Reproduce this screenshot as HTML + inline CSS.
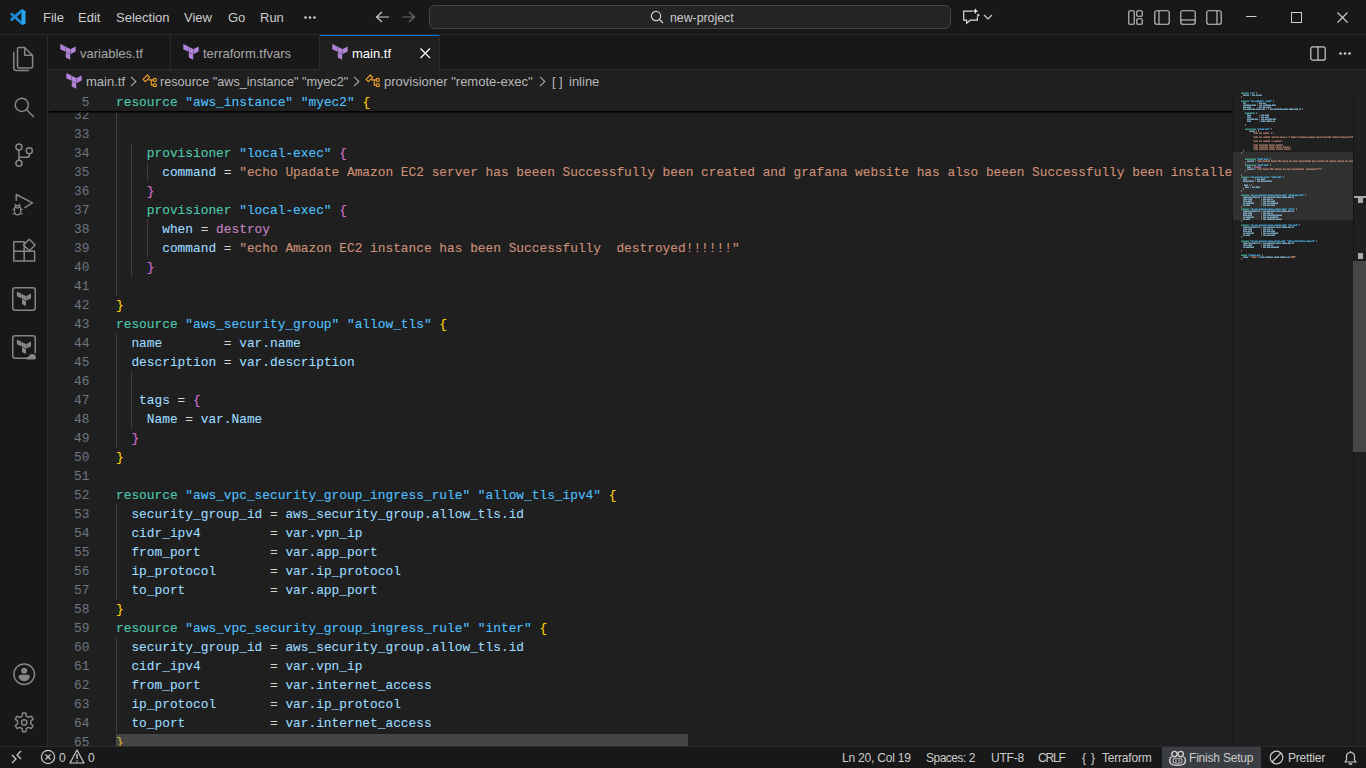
<!DOCTYPE html><html><head><meta charset="utf-8"><title>VS Code</title><style>
*{margin:0;padding:0;box-sizing:border-box}
html,body{width:1366px;height:768px;overflow:hidden;background:#1f1f1f}
body{position:relative;font-family:"Liberation Sans",sans-serif;font-size:13px;color:#ccc}
.abs{position:absolute}
svg{position:absolute;overflow:visible}
#title{left:0;top:0;width:1366px;height:35px;background:#181818;border-bottom:1px solid #2b2b2b}
#act{left:0;top:35px;width:48px;height:711px;background:#181818;border-right:1px solid #2b2b2b}
#tabs{left:48px;top:35px;width:1318px;height:35px;background:#181818}
#tabline{left:0;top:34px;width:1318px;height:1px;background:#2b2b2b;z-index:1}
#crumbs{left:48px;top:70px;width:1318px;height:22px;background:#1f1f1f}
#editor{left:48px;top:92px;width:1318px;height:654px;background:#1f1f1f;overflow:hidden}
#status{left:0;top:746px;width:1366px;height:22px;background:#181818;border-top:1px solid #2b2b2b}
.t{position:absolute;white-space:pre}
.menu{top:10px;line-height:16px;color:#ccc;font-size:13px}
.tab{position:absolute;top:0;height:35px;border-right:1px solid #2b2b2b;background:#181818}
.tab.active{background:#1f1f1f;border-right:1px solid #2b2b2b;z-index:2}
.tabtxt{position:absolute;top:11px;line-height:16px;font-size:13px;color:#a8a8a8;white-space:pre}
.crumb{position:absolute;top:4px;line-height:16px;font-size:13px;color:#b8b8b8;white-space:pre}
.code{position:absolute;left:68px;font-family:"Liberation Mono",monospace;font-size:12.83px;line-height:19px;height:19px;white-space:pre;color:#d4d4d4;-webkit-text-stroke:0.1px}
.ln{position:absolute;left:0;width:41.5px;text-align:right;font-family:"Liberation Mono",monospace;font-size:12.83px;line-height:19px;height:19px;color:#6e7681}
.k{color:#4ec9b0}.l{color:#4fc1ff}.p{color:#9cdcfe}.s{color:#ce9178}.y{color:#ffd700}.m{color:#da70d6}.kw{color:#c586c0}.b{color:#179fff}
.guide{position:absolute;width:1px;background:#404040}
.sb{position:absolute;top:3px;line-height:16px;font-size:12px;letter-spacing:-0.2px;color:#ccc;white-space:pre}
</style></head><body>
<div id="title" class="abs">
<svg style="left:6px;top:5px" width="24" height="24" viewBox="0 0 24 24"><g transform="translate(1.6,1.5) scale(0.9)"><path d="M4.4 8.4 L16.2 18.9 M4.4 14.6 L16.2 4.3" stroke="#1a8ad6" stroke-width="3" stroke-linecap="round"/><path d="M15.4 4.2 L17.2 3.8 L19.9 5.1 V18.9 L17.2 20.1 L15.4 19.7Z" fill="#2aa5f0"/></g></svg>
<div class="t menu" style="left:43px">File</div>
<div class="t menu" style="left:78px">Edit</div>
<div class="t menu" style="left:116px">Selection</div>
<div class="t menu" style="left:184px">View</div>
<div class="t menu" style="left:228px">Go</div>
<div class="t menu" style="left:260px">Run</div>
<svg style="left:304px;top:16px" width="12" height="3"><circle cx="1.5" cy="1.5" r="1.35" fill="#ccc"/><circle cx="6" cy="1.5" r="1.35" fill="#ccc"/><circle cx="10.5" cy="1.5" r="1.35" fill="#ccc"/></svg>
<svg style="left:375px;top:11px" width="16" height="12" viewBox="0 0 16 12"><path d="M7 1 L1.5 6 L7 11 M1.5 6 H14" stroke="#ccc" stroke-width="1.2" fill="none"/></svg>
<svg style="left:400px;top:11px" width="16" height="12" viewBox="0 0 16 12"><path d="M9 1 L14.5 6 L9 11 M14.5 6 H2" stroke="#6a6a6a" stroke-width="1.2" fill="none"/></svg>
<div class="abs" style="left:429px;top:5px;width:522px;height:24px;border:1px solid #454545;border-radius:6px;background:#242424"></div>
<svg style="left:650px;top:10px" width="14" height="14" viewBox="0 0 14 14"><circle cx="6" cy="6" r="4.6" stroke="#ccc" stroke-width="1.2" fill="none"/><path d="M9.3 9.3 L13 13" stroke="#ccc" stroke-width="1.3"/></svg>
<div class="t" style="left:670px;top:10px;line-height:16px;font-size:12.3px;color:#ccc">new-project</div>
<svg style="left:962px;top:8px" width="18" height="17" viewBox="0 0 18 17"><path d="M10.6 3.1 H1.7 V12.2 H4.6 V15.2 L8.4 12.2 H15.4 V8.4" stroke="#ddd" stroke-width="1.2" fill="none"/><path d="M13.4 0.2 L14.3 2.2 L16.3 3.1 L14.3 4 L13.4 6 L12.5 4 L10.5 3.1 L12.5 2.2Z" fill="#e6e6e6"/><path d="M16.2 5.3 L16.8 6.5 L18 7.1 L16.8 7.7 L16.2 8.9 L15.6 7.7 L14.4 7.1 L15.6 6.5Z" fill="#e6e6e6"/></svg>
<svg style="left:983px;top:14px" width="10" height="6" viewBox="0 0 10 6"><path d="M1 1 L5 5 L9 1" stroke="#ccc" stroke-width="1.2" fill="none"/></svg>
<svg style="left:1128px;top:10px" width="16" height="15" viewBox="0 0 16 15"><rect x="0.8" y="0.8" width="5.4" height="13.4" rx="1" stroke="#ccc" stroke-width="1.1" fill="none"/><rect x="8.8" y="0.8" width="5.4" height="5.4" rx="1" stroke="#ccc" stroke-width="1.1" fill="none"/><rect x="8.8" y="8.8" width="5.4" height="5.4" rx="1" stroke="#ccc" stroke-width="1.1" fill="none"/></svg>
<svg style="left:1154px;top:10px" width="16" height="15" viewBox="0 0 16 15"><rect x="0.8" y="0.8" width="14.4" height="13.4" rx="2" stroke="#ccc" stroke-width="1.1" fill="none"/><path d="M5 1 V14" stroke="#ccc" stroke-width="1.1" fill="none"/></svg>
<svg style="left:1180px;top:10px" width="16" height="15" viewBox="0 0 16 15"><rect x="0.8" y="0.8" width="14.4" height="13.4" rx="2" stroke="#ccc" stroke-width="1.1" fill="none"/><path d="M1 10 H15" stroke="#ccc" stroke-width="1.1" fill="none"/></svg>
<svg style="left:1206px;top:10px" width="16" height="15" viewBox="0 0 16 15"><rect x="0.8" y="0.8" width="14.4" height="13.4" rx="2" stroke="#ccc" stroke-width="1.1" fill="none"/><path d="M11 1 V14" stroke="#ccc" stroke-width="1.1" fill="none"/></svg>
<svg style="left:1246px;top:16px" width="11" height="2"><path d="M0 0.5 H10.5" stroke="#ccc" stroke-width="1"/></svg>
<svg style="left:1291px;top:12px" width="12" height="12"><rect x="0.5" y="0.5" width="10" height="10" stroke="#ccc" stroke-width="1" fill="none"/></svg>
<svg style="left:1337px;top:12px" width="12" height="12"><path d="M0.5 0.5 L10.5 10.5 M10.5 0.5 L0.5 10.5" stroke="#ccc" stroke-width="1.1"/></svg>
</div>
<div id="act" class="abs">
<svg style="left:12px;top:11px" width="24" height="24" viewBox="0 0 24 24"><path d="M7 1.5 H12.5 L20.6 9.5 V20.3 Q20.6 21.9 19 21.9 H7 Q5.5 21.9 5.5 20.3 V3 Q5.5 1.5 7 1.5Z" stroke="#868686" stroke-width="1.5" fill="none" stroke-linejoin="round" stroke-linecap="round"/><path d="M12.7 1.8 V9.3 H20.3" stroke="#868686" stroke-width="1.5" fill="none" stroke-linejoin="round" stroke-linecap="round"/><path d="M1.8 6.2 V21.9 Q1.8 24.4 4.3 24.4 H16.6" stroke="#868686" stroke-width="1.5" fill="none" stroke-linejoin="round" stroke-linecap="round"/></svg>
<svg style="left:12px;top:60px" width="24" height="24" viewBox="0 0 24 24"><circle cx="9.8" cy="9.9" r="6.6" stroke="#868686" stroke-width="1.5" fill="none" stroke-linejoin="round" stroke-linecap="round"/><path d="M14.6 14.8 L21.6 21.8" stroke="#868686" stroke-width="1.5" fill="none" stroke-linejoin="round" stroke-linecap="round"/></svg>
<svg style="left:12px;top:108px" width="24" height="24" viewBox="0 0 24 24"><circle cx="6.9" cy="3.9" r="3" stroke="#868686" stroke-width="1.5" fill="none" stroke-linejoin="round" stroke-linecap="round"/><circle cx="6.9" cy="20.2" r="3" stroke="#868686" stroke-width="1.5" fill="none" stroke-linejoin="round" stroke-linecap="round"/><circle cx="17.3" cy="7.8" r="3" stroke="#868686" stroke-width="1.5" fill="none" stroke-linejoin="round" stroke-linecap="round"/><path d="M6.9 6.9 V17.2 M17.3 10.8 V12.2 Q17.3 14.3 15.2 14.3 H6.9" stroke="#868686" stroke-width="1.5" fill="none" stroke-linejoin="round" stroke-linecap="round"/></svg>
<svg style="left:12px;top:158px" width="24" height="24" viewBox="0 0 24 24"><path d="M4.3 7.2 V1.5 L20.5 9.9 L12.9 14.6" stroke="#868686" stroke-width="1.5" fill="none" stroke-linejoin="round" stroke-linecap="round"/><path d="M2.5 16.5 Q2.5 12.5 5.6 12.5 Q8.7 12.5 8.7 16.5 V18.5 Q8.7 21.8 5.6 21.8 Q2.5 21.8 2.5 18.5 Z M3.2 13.6 L5.6 15.3 L8 13.6 M0.5 16.3 H2.5 M8.7 16.3 H10.7 M0.6 21.2 L2.8 20 M10.6 21.2 L8.4 20 M4 12.8 L3 11.2 M7.2 12.8 L8.2 11.2" stroke="#868686" stroke-width="1.3" fill="none" stroke-linejoin="round"/></svg>
<svg style="left:12px;top:203px" width="24" height="24" viewBox="0 0 24 24"><path d="M1.8 3.8 H12.2 V23 H1.8Z M1.8 13.2 H22.6 V23 H12.2" stroke="#868686" stroke-width="1.5" fill="none" stroke-linejoin="round" stroke-linecap="round"/><path d="M17.3 1.2 L23.1 7 L17.3 12.8 L11.5 7Z" stroke="#868686" stroke-width="1.5" fill="none" stroke-linejoin="round" stroke-linecap="round"/></svg>
<svg style="left:12px;top:252px" width="24" height="24" viewBox="0 0 24 24"><rect x="0.75" y="0.75" width="22.5" height="22.5" rx="2.5" stroke="#868686" stroke-width="1.5" fill="none" stroke-linejoin="round" stroke-linecap="round"/><path d="M0.3 0 L5.5 2.6 V7.8 L0.3 5.2Z M5.8 2.8 L10.2 5.0 V10.2 L5.8 8.0Z M10.5 5.0 L15.7 2.4 V7.6 L10.5 10.2Z M5.8 8.4 L10.2 10.6 V15.8 L5.8 13.6Z" fill="#868686" transform="translate(4.6,4.4) scale(0.92)"/></svg>
<svg style="left:12px;top:300px" width="24" height="24" viewBox="0 0 24 24"><path d="M17 23.25 H3.25 Q0.75 23.25 0.75 20.75 V3.25 Q0.75 0.75 3.25 0.75 H20.75 Q23.25 0.75 23.25 3.25 V17.5" stroke="#868686" stroke-width="1.5" fill="none" stroke-linejoin="round" stroke-linecap="round"/><path d="M0.3 0 L5.5 2.6 V7.8 L0.3 5.2Z M5.8 2.8 L10.2 5.0 V10.2 L5.8 8.0Z M10.5 5.0 L15.7 2.4 V7.6 L10.5 10.2Z M5.8 8.4 L10.2 10.6 V15.8 L5.8 13.6Z" fill="#868686" transform="translate(4.6,4.4) scale(0.92)"/><path d="M14.3 24.2 Q14.3 21.6 16.8 21.4 Q17.8 18.8 20.6 19.1 Q23.8 19.5 23.9 22.6 Q24.2 24.4 22.4 24.6 H15.5 Q14.3 24.6 14.3 24.2Z" fill="#868686"/></svg>
<svg style="left:12px;top:627px" width="24" height="24" viewBox="0 0 24 24"><circle cx="12.2" cy="12.3" r="10.3" stroke="#868686" stroke-width="1.5" fill="none" stroke-linejoin="round" stroke-linecap="round"/><circle cx="12.2" cy="8.8" r="3" fill="#868686"/><path d="M6.7 14.2 Q6.7 12.8 8.2 12.8 H16.2 Q17.7 12.8 17.7 14.2 V15.2 Q16.2 19.2 12.2 19.2 Q8.2 19.2 6.7 15.2Z" fill="#868686"/></svg>
<svg style="left:12px;top:675px" width="24" height="24" viewBox="0 0 24 24"><path d="M10.4 1.8 H13.6 L14.1 4.8 L16.4 6.1 L19.3 5 L20.9 7.8 L18.6 9.8 V12.4 L20.9 14.4 L19.3 17.2 L16.4 16.1 L14.1 17.4 L13.6 20.4 H10.4 L9.9 17.4 L7.6 16.1 L4.7 17.2 L3.1 14.4 L5.4 12.4 V9.8 L3.1 7.8 L4.7 5 L7.6 6.1 L9.9 4.8Z" stroke="#868686" stroke-width="1.5" fill="none" stroke-linejoin="round" stroke-linecap="round" transform="translate(0.2,1.3)"/><circle cx="12.2" cy="12.4" r="2.6" stroke="#868686" stroke-width="1.5" fill="none" stroke-linejoin="round" stroke-linecap="round"/></svg>
</div>
<div id="tabs" class="abs">
<div id="tabline" class="abs"></div>
<div class="tab" style="left:0;width:123px"><svg style="left:12px;top:9px" width="16" height="16" viewBox="0 0 16 16"><path d="M0.3 0 L5.5 2.6 V7.8 L0.3 5.2Z M5.8 2.8 L10.2 5.0 V10.2 L5.8 8.0Z M10.5 5.0 L15.7 2.4 V7.6 L10.5 10.2Z M5.8 8.4 L10.2 10.6 V15.8 L5.8 13.6Z" fill="#b083d8"/></svg><div class="tabtxt" style="left:32px">variables.tf</div></div>
<div class="tab" style="left:123px;width:149px"><svg style="left:12px;top:9px" width="16" height="16" viewBox="0 0 16 16"><path d="M0.3 0 L5.5 2.6 V7.8 L0.3 5.2Z M5.8 2.8 L10.2 5.0 V10.2 L5.8 8.0Z M10.5 5.0 L15.7 2.4 V7.6 L10.5 10.2Z M5.8 8.4 L10.2 10.6 V15.8 L5.8 13.6Z" fill="#b083d8"/></svg><div class="tabtxt" style="left:32px">terraform.tfvars</div></div>
<div class="tab active" style="left:272px;width:120px"><div class="abs" style="left:0;top:0;width:119px;height:1px;background:#0078d4"></div><svg style="left:12px;top:9px" width="16" height="16" viewBox="0 0 16 16"><path d="M0.3 0 L5.5 2.6 V7.8 L0.3 5.2Z M5.8 2.8 L10.2 5.0 V10.2 L5.8 8.0Z M10.5 5.0 L15.7 2.4 V7.6 L10.5 10.2Z M5.8 8.4 L10.2 10.6 V15.8 L5.8 13.6Z" fill="#b083d8"/></svg><div class="tabtxt" style="left:32px;color:#fff">main.tf</div><svg style="left:100px;top:13px" width="11" height="11"><path d="M0.5 0.5 L10 10 M10 0.5 L0.5 10" stroke="#fff" stroke-width="1.2"/></svg></div>
<svg style="left:1262px;top:11px" width="16" height="15" viewBox="0 0 16 15"><rect x="0.8" y="0.8" width="14.4" height="13.4" rx="2" stroke="#ccc" stroke-width="1.2" fill="none"/><path d="M8 1 V14" stroke="#ccc" stroke-width="1.2"/></svg>
<svg style="left:1291px;top:17px" width="12" height="3"><circle cx="1.5" cy="1.5" r="1.35" fill="#ccc"/><circle cx="6" cy="1.5" r="1.35" fill="#ccc"/><circle cx="10.5" cy="1.5" r="1.35" fill="#ccc"/></svg>
</div>
<div id="crumbs" class="abs">
<svg style="left:18px;top:3px" width="16" height="16" viewBox="0 0 16 16"><path d="M0.3 0 L5.5 2.6 V7.8 L0.3 5.2Z M5.8 2.8 L10.2 5.0 V10.2 L5.8 8.0Z M10.5 5.0 L15.7 2.4 V7.6 L10.5 10.2Z M5.8 8.4 L10.2 10.6 V15.8 L5.8 13.6Z" fill="#b083d8"/></svg>
<div class="crumb" style="left:38px">main.tf</div>
<svg style="left:82px;top:6px" width="7" height="11" viewBox="0 0 7 11"><path d="M1 0.8 L5.8 5.5 L1 10.2" stroke="#a9a9a9" stroke-width="1.1" fill="none"/></svg>
<svg style="left:93px;top:3px" width="16" height="16" viewBox="0 0 16 16"><path d="M2.1 6.3 L6.4 2 L8.6 4.3 L4.3 8.6 Z" stroke="#ee9d28" stroke-width="1.2" fill="none" stroke-linejoin="round"/><path d="M7.3 6.8 H12.3 M10.3 6.8 V12.1 H12.3" stroke="#ee9d28" stroke-width="1.2" fill="none"/><circle cx="13.8" cy="6.9" r="1.6" stroke="#ee9d28" stroke-width="1.2" fill="none"/><circle cx="13.8" cy="12.1" r="1.6" stroke="#ee9d28" stroke-width="1.2" fill="none"/></svg>
<div class="crumb" style="left:112px;font-size:12.66px">resource "aws_instance" "myec2"</div>
<svg style="left:305px;top:6px" width="7" height="11" viewBox="0 0 7 11"><path d="M1 0.8 L5.8 5.5 L1 10.2" stroke="#a9a9a9" stroke-width="1.1" fill="none"/></svg>
<svg style="left:316px;top:3px" width="16" height="16" viewBox="0 0 16 16"><path d="M2.1 6.3 L6.4 2 L8.6 4.3 L4.3 8.6 Z" stroke="#ee9d28" stroke-width="1.2" fill="none" stroke-linejoin="round"/><path d="M7.3 6.8 H12.3 M10.3 6.8 V12.1 H12.3" stroke="#ee9d28" stroke-width="1.2" fill="none"/><circle cx="13.8" cy="6.9" r="1.6" stroke="#ee9d28" stroke-width="1.2" fill="none"/><circle cx="13.8" cy="12.1" r="1.6" stroke="#ee9d28" stroke-width="1.2" fill="none"/></svg>
<div class="crumb" style="left:336px">provisioner "remote-exec"</div>
<svg style="left:491px;top:6px" width="7" height="11" viewBox="0 0 7 11"><path d="M1 0.8 L5.8 5.5 L1 10.2" stroke="#a9a9a9" stroke-width="1.1" fill="none"/></svg>
<div class="crumb" style="left:504px">[</div><div class="crumb" style="left:511px">]</div>
<div class="crumb" style="left:521px">inline</div>
</div>
<div id="editor" class="abs">
<div class="abs" style="left:0;top:0;width:1184px;height:654px;overflow:hidden">
<div class="guide" style="left:68px;top:13px;height:190px"></div>
<div class="guide" style="left:83px;top:51px;height:133px"></div>
<div class="guide" style="left:99px;top:70px;height:19px"></div>
<div class="guide" style="left:99px;top:127px;height:38px"></div>
<div class="guide" style="left:68px;top:241px;height:114px"></div>
<div class="guide" style="left:83px;top:279px;height:57px"></div>
<div class="guide" style="left:68px;top:412px;height:95px"></div>
<div class="guide" style="left:68px;top:545px;height:95px"></div>
<div class="ln" style="top:13.5px">32</div>
<div class="code" style="top:13.5px"></div>
<div class="ln" style="top:32.5px">33</div>
<div class="code" style="top:32.5px"></div>
<div class="ln" style="top:51.5px">34</div>
<div class="code" style="top:51.5px">    <span class="k">provisioner</span> <span class="l">"local-exec"</span> <span class="m">{</span></div>
<div class="ln" style="top:70.5px">35</div>
<div class="code" style="top:70.5px">      <span class="p">command</span> = <span class="s">"echo Upadate Amazon EC2 server has beeen Successfully been created and grafana website has also beeen Successfully been installed"</span></div>
<div class="ln" style="top:89.5px">36</div>
<div class="code" style="top:89.5px">    <span class="m">}</span></div>
<div class="ln" style="top:108.5px">37</div>
<div class="code" style="top:108.5px">    <span class="k">provisioner</span> <span class="l">"local-exec"</span> <span class="m">{</span></div>
<div class="ln" style="top:127.5px">38</div>
<div class="code" style="top:127.5px">      <span class="p">when</span> = <span class="kw">destroy</span></div>
<div class="ln" style="top:146.5px">39</div>
<div class="code" style="top:146.5px">      <span class="p">command</span> = <span class="s">"echo Amazon EC2 instance has been Successfully  destroyed!!!!!!"</span></div>
<div class="ln" style="top:165.5px">40</div>
<div class="code" style="top:165.5px">    <span class="m">}</span></div>
<div class="ln" style="top:184.5px">41</div>
<div class="code" style="top:184.5px"></div>
<div class="ln" style="top:203.5px">42</div>
<div class="code" style="top:203.5px"><span class="y">}</span></div>
<div class="ln" style="top:222.5px">43</div>
<div class="code" style="top:222.5px"><span class="k">resource</span> <span class="l">"aws_security_group"</span> <span class="l">"allow_tls"</span> <span class="y">{</span></div>
<div class="ln" style="top:241.5px">44</div>
<div class="code" style="top:241.5px">  <span class="p">name</span>        = <span class="p">var.name</span></div>
<div class="ln" style="top:260.5px">45</div>
<div class="code" style="top:260.5px">  <span class="p">description</span> = <span class="p">var.description</span></div>
<div class="ln" style="top:279.5px">46</div>
<div class="code" style="top:279.5px"></div>
<div class="ln" style="top:298.5px">47</div>
<div class="code" style="top:298.5px">   <span class="p">tags</span> = <span class="m">{</span></div>
<div class="ln" style="top:317.5px">48</div>
<div class="code" style="top:317.5px">    <span class="p">Name</span> = <span class="p">var.Name</span></div>
<div class="ln" style="top:336.5px">49</div>
<div class="code" style="top:336.5px">  <span class="m">}</span></div>
<div class="ln" style="top:355.5px">50</div>
<div class="code" style="top:355.5px"><span class="y">}</span></div>
<div class="ln" style="top:374.5px">51</div>
<div class="code" style="top:374.5px"></div>
<div class="ln" style="top:393.5px">52</div>
<div class="code" style="top:393.5px"><span class="k">resource</span> <span class="l">"aws_vpc_security_group_ingress_rule"</span> <span class="l">"allow_tls_ipv4"</span> <span class="y">{</span></div>
<div class="ln" style="top:412.5px">53</div>
<div class="code" style="top:412.5px">  <span class="p">security_group_id</span> = <span class="p">aws_security_group.allow_tls.id</span></div>
<div class="ln" style="top:431.5px">54</div>
<div class="code" style="top:431.5px">  <span class="p">cidr_ipv4</span>         = <span class="p">var.vpn_ip</span></div>
<div class="ln" style="top:450.5px">55</div>
<div class="code" style="top:450.5px">  <span class="p">from_port</span>         = <span class="p">var.app_port</span></div>
<div class="ln" style="top:469.5px">56</div>
<div class="code" style="top:469.5px">  <span class="p">ip_protocol</span>       = <span class="p">var.ip_protocol</span></div>
<div class="ln" style="top:488.5px">57</div>
<div class="code" style="top:488.5px">  <span class="p">to_port</span>           = <span class="p">var.app_port</span></div>
<div class="ln" style="top:507.5px">58</div>
<div class="code" style="top:507.5px"><span class="y">}</span></div>
<div class="ln" style="top:526.5px">59</div>
<div class="code" style="top:526.5px"><span class="k">resource</span> <span class="l">"aws_vpc_security_group_ingress_rule"</span> <span class="l">"inter"</span> <span class="y">{</span></div>
<div class="ln" style="top:545.5px">60</div>
<div class="code" style="top:545.5px">  <span class="p">security_group_id</span> = <span class="p">aws_security_group.allow_tls.id</span></div>
<div class="ln" style="top:564.5px">61</div>
<div class="code" style="top:564.5px">  <span class="p">cidr_ipv4</span>         = <span class="p">var.vpn_ip</span></div>
<div class="ln" style="top:583.5px">62</div>
<div class="code" style="top:583.5px">  <span class="p">from_port</span>         = <span class="p">var.internet_access</span></div>
<div class="ln" style="top:602.5px">63</div>
<div class="code" style="top:602.5px">  <span class="p">ip_protocol</span>       = <span class="p">var.ip_protocol</span></div>
<div class="ln" style="top:621.5px">64</div>
<div class="code" style="top:621.5px">  <span class="p">to_port</span>           = <span class="p">var.internet_access</span></div>
<div class="ln" style="top:640.5px">65</div>
<div class="code" style="top:640.5px"><span class="y">}</span></div>
<div class="abs" style="left:0;top:0;width:1184px;height:19px;background:#1f1f1f"></div>
<div class="abs" style="left:1px;top:19px;width:1183px;height:3px;background:linear-gradient(#000 0%,#000 30%,rgba(0,0,0,0.45) 55%,rgba(0,0,0,0.12) 80%,transparent)"></div>
<div class="ln" style="top:0.5px">5</div>
<div class="code" style="top:0.5px"><span class="k">resource</span> <span class="l">"aws_instance"</span> <span class="l">"myec2"</span> <span class="y">{</span></div>
<div class="abs" style="left:68px;top:642px;width:572px;height:12px;background:rgba(121,121,121,0.43)"></div>
</div>
<div class="abs" style="left:1184px;top:0;width:1px;height:654px;background:#181818"></div>
<div class="abs" style="left:1185px;top:60px;width:120px;height:68px;background:rgba(121,121,121,0.2)"></div>
<svg style="left:1193px;top:0" width="112" height="180" opacity="0.8"><path fill="#4ec9b0" fill-opacity="0.4" d="M0 0h5v1h-5zM6 0h2v1h-2zM0 8h8v1h-8zM4 20h6v1h-6zM11 20h3v1h-3zM4 36h11v1h-11zM4 66h11v1h-11zM4 72h11v1h-11zM0 84h8v1h-8zM0 102h8v1h-8zM0 116h8v1h-8zM0 132h8v1h-8zM0 148h8v1h-8zM0 162h2v1h-2zM3 162h2v1h-2z"/><path fill="#4ec9b0" fill-opacity="0.8" d="M0 1h4v1h-4zM5 1h3v1h-3zM0 9h8v1h-8zM4 21h7v1h-7zM12 21h2v1h-2zM4 37h4v1h-4zM9 37h1v1h-1zM11 37h4v1h-4zM4 67h4v1h-4zM9 67h1v1h-1zM11 67h4v1h-4zM4 73h4v1h-4zM9 73h1v1h-1zM11 73h4v1h-4zM0 85h8v1h-8zM0 103h8v1h-8zM0 117h8v1h-8zM0 133h8v1h-8zM0 149h8v1h-8zM0 163h6v1h-6z"/><path fill="#4ec9b0" fill-opacity="0.6" d="M5 0h1v1h-1zM4 1h1v1h-1zM10 20h1v1h-1zM11 21h1v1h-1zM8 37h1v1h-1zM10 37h1v1h-1zM8 67h1v1h-1zM10 67h1v1h-1zM8 73h1v1h-1zM10 73h1v1h-1zM2 162h1v1h-1zM5 162h1v1h-1z"/><path fill="#4fc1ff" fill-opacity="0.6" d="M9 0h1v1h-1zM13 0h1v1h-1zM9 8h1v1h-1zM17 8h1v1h-1zM22 8h1v1h-1zM24 8h1v1h-1zM30 8h1v1h-1zM13 9h2v1h-2zM16 36h1v1h-1zM21 36h1v1h-1zM28 36h1v1h-1zM16 66h2v1h-2zM21 66h1v1h-1zM27 66h1v1h-1zM16 72h2v1h-2zM21 72h1v1h-1zM27 72h1v1h-1zM9 84h1v1h-1zM20 84h1v1h-1zM28 84h1v1h-1zM30 84h1v1h-1zM32 84h2v1h-2zM37 84h2v1h-2zM40 84h1v1h-1zM13 85h1v1h-1zM19 85h1v1h-1zM22 85h1v1h-1zM36 85h1v1h-1zM9 102h1v1h-1zM24 102h1v1h-1zM43 102h1v1h-1zM45 102h1v1h-1zM47 102h1v1h-1zM49 102h2v1h-2zM54 102h2v1h-2zM62 102h1v1h-1zM13 103h1v1h-1zM17 103h1v1h-1zM23 103h1v1h-1zM26 103h1v1h-1zM32 103h2v1h-2zM40 103h1v1h-1zM53 103h1v1h-1zM57 103h2v1h-2zM9 116h1v1h-1zM24 116h1v1h-1zM43 116h1v1h-1zM45 116h1v1h-1zM47 116h1v1h-1zM50 116h1v1h-1zM53 116h1v1h-1zM13 117h1v1h-1zM17 117h1v1h-1zM23 117h1v1h-1zM26 117h1v1h-1zM32 117h2v1h-2zM40 117h1v1h-1zM48 117h1v1h-1zM9 132h1v1h-1zM24 132h1v1h-1zM43 132h1v1h-1zM45 132h1v1h-1zM47 132h1v1h-1zM50 132h1v1h-1zM56 132h1v1h-1zM13 133h1v1h-1zM17 133h1v1h-1zM23 133h1v1h-1zM26 133h1v1h-1zM32 133h2v1h-2zM40 133h1v1h-1zM51 133h2v1h-2zM9 148h1v1h-1zM24 148h1v1h-1zM42 148h1v1h-1zM44 148h1v1h-1zM46 148h1v1h-1zM48 148h2v1h-2zM54 148h2v1h-2zM57 148h1v1h-1zM60 148h2v1h-2zM72 148h2v1h-2zM13 149h1v1h-1zM17 149h1v1h-1zM23 149h1v1h-1zM26 149h1v1h-1zM32 149h1v1h-1zM39 149h1v1h-1zM52 149h1v1h-1zM56 149h1v1h-1zM62 149h1v1h-1zM64 149h2v1h-2zM69 149h1v1h-1zM7 162h1v1h-1zM11 162h1v1h-1zM18 162h2v1h-2zM15 163h1v1h-1zM19 164h1v1h-1zM48 164h1v1h-1zM19 165h1v1h-1zM48 165h1v1h-1z"/><path fill="#4fc1ff" fill-opacity="0.4" d="M10 0h3v1h-3zM10 8h3v1h-3zM14 8h3v1h-3zM18 8h4v1h-4zM25 8h4v1h-4zM17 36h4v1h-4zM22 36h6v1h-6zM18 66h3v1h-3zM22 66h5v1h-5zM18 72h3v1h-3zM22 72h5v1h-5zM10 84h3v1h-3zM14 84h6v1h-6zM21 84h1v1h-1zM23 84h5v1h-5zM31 84h1v1h-1zM34 84h2v1h-2zM39 84h1v1h-1zM10 102h3v1h-3zM14 102h3v1h-3zM18 102h6v1h-6zM25 102h1v1h-1zM27 102h5v1h-5zM33 102h7v1h-7zM41 102h2v1h-2zM44 102h1v1h-1zM48 102h1v1h-1zM51 102h2v1h-2zM56 102h1v1h-1zM58 102h3v1h-3zM10 116h3v1h-3zM14 116h3v1h-3zM18 116h6v1h-6zM25 116h1v1h-1zM27 116h5v1h-5zM33 116h7v1h-7zM41 116h2v1h-2zM44 116h1v1h-1zM48 116h2v1h-2zM51 116h2v1h-2zM10 132h3v1h-3zM14 132h3v1h-3zM18 132h6v1h-6zM25 132h1v1h-1zM27 132h5v1h-5zM33 132h7v1h-7zM41 132h2v1h-2zM44 132h1v1h-1zM48 132h2v1h-2zM52 132h3v1h-3zM10 148h3v1h-3zM14 148h3v1h-3zM18 148h6v1h-6zM25 148h1v1h-1zM27 148h5v1h-5zM33 148h6v1h-6zM40 148h2v1h-2zM43 148h1v1h-1zM47 148h1v1h-1zM50 148h2v1h-2zM53 148h1v1h-1zM58 148h2v1h-2zM62 148h2v1h-2zM65 148h3v1h-3zM70 148h2v1h-2zM8 162h3v1h-3zM12 162h3v1h-3zM16 162h2v1h-2zM18 164h1v1h-1zM18 165h1v1h-1z"/><path fill="#4fc1ff" fill-opacity="0.8" d="M10 1h3v1h-3zM29 8h1v1h-1zM10 9h3v1h-3zM15 9h7v1h-7zM25 9h5v1h-5zM17 37h6v1h-6zM24 37h4v1h-4zM17 67h5v1h-5zM23 67h4v1h-4zM17 73h5v1h-5zM23 73h4v1h-4zM10 85h3v1h-3zM14 85h5v1h-5zM20 85h2v1h-2zM23 85h5v1h-5zM31 85h5v1h-5zM37 85h3v1h-3zM61 102h1v1h-1zM10 103h3v1h-3zM14 103h3v1h-3zM18 103h5v1h-5zM24 103h2v1h-2zM27 103h5v1h-5zM34 103h6v1h-6zM41 103h4v1h-4zM48 103h5v1h-5zM54 103h3v1h-3zM59 103h3v1h-3zM10 117h3v1h-3zM14 117h3v1h-3zM18 117h5v1h-5zM24 117h2v1h-2zM27 117h5v1h-5zM34 117h6v1h-6zM41 117h4v1h-4zM49 117h4v1h-4zM55 132h1v1h-1zM10 133h3v1h-3zM14 133h3v1h-3zM18 133h5v1h-5zM24 133h2v1h-2zM27 133h5v1h-5zM34 133h6v1h-6zM41 133h4v1h-4zM48 133h3v1h-3zM53 133h3v1h-3zM68 148h1v1h-1zM10 149h3v1h-3zM14 149h3v1h-3zM18 149h5v1h-5zM24 149h2v1h-2zM27 149h5v1h-5zM33 149h6v1h-6zM40 149h4v1h-4zM47 149h5v1h-5zM53 149h3v1h-3zM57 149h5v1h-5zM63 149h1v1h-1zM66 149h3v1h-3zM70 149h3v1h-3zM8 163h7v1h-7zM16 163h3v1h-3z"/><path fill="#bbbbbb" fill-opacity="0.6" d="M15 0h1v1h-1zM15 1h1v1h-1zM0 4h1v1h-1zM0 5h1v1h-1zM32 8h1v1h-1zM32 9h1v1h-1zM15 20h1v1h-1zM15 21h1v1h-1zM4 32h1v1h-1zM4 33h1v1h-1zM30 36h1v1h-1zM30 37h1v1h-1zM2 58h1v1h-1zM2 59h1v1h-1zM0 60h1v1h-1zM0 61h1v1h-1zM29 66h1v1h-1zM29 67h1v1h-1zM4 70h1v1h-1zM4 71h1v1h-1zM29 72h1v1h-1zM29 73h1v1h-1zM4 78h1v1h-1zM4 79h1v1h-1zM0 82h1v1h-1zM0 83h1v1h-1zM42 84h1v1h-1zM42 85h1v1h-1zM10 92h1v1h-1zM10 93h1v1h-1zM2 96h1v1h-1zM2 97h1v1h-1zM0 98h1v1h-1zM0 99h1v1h-1zM64 102h1v1h-1zM64 103h1v1h-1zM0 114h1v1h-1zM0 115h1v1h-1zM55 116h1v1h-1zM55 117h1v1h-1zM0 128h1v1h-1zM0 129h1v1h-1zM58 132h1v1h-1zM58 133h1v1h-1zM0 144h1v1h-1zM0 145h1v1h-1zM75 148h1v1h-1zM75 149h1v1h-1zM0 158h1v1h-1zM0 159h1v1h-1zM21 162h1v1h-1zM21 163h1v1h-1zM0 166h1v1h-1zM0 167h1v1h-1z"/><path fill="#9cdcfe" fill-opacity="0.4" d="M2 2h6v1h-6zM11 2h3v1h-3zM15 2h6v1h-6zM14 3h1v1h-1zM2 10h3v1h-3zM18 10h3v1h-3zM22 10h3v1h-3zM21 11h1v1h-1zM2 12h3v1h-3zM6 12h4v1h-4zM12 12h3v1h-3zM18 12h3v1h-3zM22 12h3v1h-3zM26 12h4v1h-4zM32 12h3v1h-3zM21 13h1v1h-1zM3 14h2v1h-2zM6 14h4v1h-4zM18 14h3v1h-3zM23 14h2v1h-2zM26 14h4v1h-4zM21 15h1v1h-1zM2 16h3v1h-3zM6 16h6v1h-6zM13 16h1v1h-1zM15 16h5v1h-5zM21 16h1v1h-1zM23 16h1v1h-1zM29 16h3v1h-3zM33 16h6v1h-6zM40 16h1v1h-1zM42 16h5v1h-5zM48 16h1v1h-1zM51 16h2v1h-2zM56 16h1v1h-1zM58 16h1v1h-1zM47 17h1v1h-1zM57 17h1v1h-1zM7 22h3v1h-3zM20 22h3v1h-3zM25 22h3v1h-3zM23 23h1v1h-1zM6 24h4v1h-4zM20 24h3v1h-3zM24 24h4v1h-4zM23 25h1v1h-1zM6 26h5v1h-5zM12 26h1v1h-1zM15 26h2v1h-2zM20 26h3v1h-3zM24 26h5v1h-5zM30 26h1v1h-1zM33 26h2v1h-2zM23 27h1v1h-1zM7 28h2v1h-2zM20 28h2v1h-2zM25 28h2v1h-2zM29 28h2v1h-2zM32 28h2v1h-2zM24 29h1v1h-1zM8 38h2v1h-2zM11 38h3v1h-3zM6 68h6v1h-6zM6 74h1v1h-1zM8 74h2v1h-2zM6 76h6v1h-6zM2 86h4v1h-4zM16 86h3v1h-3zM20 86h4v1h-4zM19 87h1v1h-1zM3 88h6v1h-6zM10 88h3v1h-3zM16 88h3v1h-3zM21 88h6v1h-6zM28 88h3v1h-3zM19 89h1v1h-1zM4 92h3v1h-3zM5 94h3v1h-3zM11 94h3v1h-3zM16 94h3v1h-3zM14 95h1v1h-1zM2 104h6v1h-6zM9 104h1v1h-1zM11 104h5v1h-5zM17 104h1v1h-1zM22 104h3v1h-3zM26 104h6v1h-6zM33 104h1v1h-1zM35 104h5v1h-5zM41 104h1v1h-1zM44 104h2v1h-2zM49 104h1v1h-1zM51 104h1v1h-1zM40 105h1v1h-1zM50 105h1v1h-1zM2 106h2v1h-2zM5 106h1v1h-1zM7 106h3v1h-3zM22 106h3v1h-3zM26 106h3v1h-3zM30 106h2v1h-2zM25 107h1v1h-1zM3 108h3v1h-3zM7 108h3v1h-3zM22 108h3v1h-3zM26 108h3v1h-3zM30 108h3v1h-3zM25 109h1v1h-1zM2 110h2v1h-2zM5 110h3v1h-3zM9 110h3v1h-3zM22 110h3v1h-3zM26 110h2v1h-2zM29 110h3v1h-3zM33 110h3v1h-3zM25 111h1v1h-1zM3 112h1v1h-1zM5 112h3v1h-3zM22 112h3v1h-3zM26 112h3v1h-3zM30 112h3v1h-3zM25 113h1v1h-1zM2 118h6v1h-6zM9 118h1v1h-1zM11 118h5v1h-5zM17 118h1v1h-1zM22 118h3v1h-3zM26 118h6v1h-6zM33 118h1v1h-1zM35 118h5v1h-5zM41 118h1v1h-1zM44 118h2v1h-2zM49 118h1v1h-1zM51 118h1v1h-1zM40 119h1v1h-1zM50 119h1v1h-1zM2 120h2v1h-2zM5 120h1v1h-1zM7 120h3v1h-3zM22 120h3v1h-3zM26 120h3v1h-3zM30 120h2v1h-2zM25 121h1v1h-1zM3 122h3v1h-3zM7 122h3v1h-3zM22 122h3v1h-3zM26 122h2v1h-2zM29 122h4v1h-4zM35 122h6v1h-6zM25 123h1v1h-1zM2 124h2v1h-2zM5 124h3v1h-3zM9 124h3v1h-3zM22 124h3v1h-3zM26 124h2v1h-2zM29 124h3v1h-3zM33 124h3v1h-3zM25 125h1v1h-1zM3 126h1v1h-1zM5 126h3v1h-3zM22 126h3v1h-3zM26 126h2v1h-2zM29 126h4v1h-4zM35 126h6v1h-6zM25 127h1v1h-1zM2 134h6v1h-6zM9 134h1v1h-1zM11 134h5v1h-5zM17 134h1v1h-1zM22 134h3v1h-3zM26 134h6v1h-6zM33 134h1v1h-1zM35 134h5v1h-5zM41 134h1v1h-1zM44 134h2v1h-2zM49 134h1v1h-1zM51 134h1v1h-1zM40 135h1v1h-1zM50 135h1v1h-1zM2 136h2v1h-2zM5 136h1v1h-1zM7 136h3v1h-3zM22 136h3v1h-3zM26 136h3v1h-3zM30 136h2v1h-2zM25 137h1v1h-1zM3 138h3v1h-3zM7 138h3v1h-3zM22 138h3v1h-3zM26 138h2v1h-2zM30 138h3v1h-3zM25 139h1v1h-1zM2 140h2v1h-2zM5 140h3v1h-3zM9 140h3v1h-3zM22 140h3v1h-3zM26 140h2v1h-2zM29 140h3v1h-3zM33 140h3v1h-3zM25 141h1v1h-1zM3 142h1v1h-1zM5 142h3v1h-3zM22 142h3v1h-3zM26 142h2v1h-2zM30 142h3v1h-3zM25 143h1v1h-1zM2 150h6v1h-6zM9 150h1v1h-1zM11 150h5v1h-5zM17 150h1v1h-1zM22 150h3v1h-3zM26 150h6v1h-6zM33 150h1v1h-1zM35 150h5v1h-5zM41 150h1v1h-1zM44 150h2v1h-2zM49 150h1v1h-1zM51 150h1v1h-1zM40 151h1v1h-1zM50 151h1v1h-1zM2 152h2v1h-2zM5 152h1v1h-1zM7 152h3v1h-3zM22 152h3v1h-3zM26 152h1v1h-1zM30 152h2v1h-2zM25 153h1v1h-1zM2 154h2v1h-2zM5 154h3v1h-3zM9 154h3v1h-3zM22 154h3v1h-3zM26 154h1v1h-1zM30 154h3v1h-3zM34 154h3v1h-3zM25 155h1v1h-1zM2 164h2v1h-2zM5 164h2v1h-2zM20 164h3v1h-3zM24 164h3v1h-3zM28 164h4v1h-4zM33 164h4v1h-4zM39 164h2v1h-2zM43 164h2v1h-2zM46 164h2v1h-2zM32 165h1v1h-1zM38 165h1v1h-1z"/><path fill="#9cdcfe" fill-opacity="0.8" d="M2 3h3v1h-3zM6 3h2v1h-2zM11 3h3v1h-3zM15 3h3v1h-3zM19 3h2v1h-2zM2 11h2v1h-2zM18 11h3v1h-3zM22 11h2v1h-2zM3 13h7v1h-7zM11 13h4v1h-4zM18 13h3v1h-3zM23 13h7v1h-7zM31 13h4v1h-4zM2 15h3v1h-3zM6 15h4v1h-4zM18 15h3v1h-3zM22 15h3v1h-3zM26 15h4v1h-4zM2 17h3v1h-3zM6 17h5v1h-5zM12 17h2v1h-2zM15 17h5v1h-5zM22 17h2v1h-2zM29 17h3v1h-3zM33 17h5v1h-5zM39 17h2v1h-2zM42 17h5v1h-5zM48 17h5v1h-5zM54 17h3v1h-3zM59 17h1v1h-1zM6 23h4v1h-4zM20 23h3v1h-3zM24 23h4v1h-4zM6 25h4v1h-4zM20 25h3v1h-3zM24 25h4v1h-4zM6 27h2v1h-2zM9 27h4v1h-4zM14 27h3v1h-3zM20 27h3v1h-3zM24 27h2v1h-2zM27 27h4v1h-4zM32 27h3v1h-3zM6 29h4v1h-4zM20 29h4v1h-4zM25 29h4v1h-4zM30 29h1v1h-1zM33 29h1v1h-1zM9 39h2v1h-2zM12 39h2v1h-2zM6 69h7v1h-7zM6 75h4v1h-4zM6 77h7v1h-7zM2 87h4v1h-4zM16 87h3v1h-3zM20 87h4v1h-4zM2 89h5v1h-5zM8 89h2v1h-2zM11 89h2v1h-2zM16 89h3v1h-3zM20 89h5v1h-5zM26 89h2v1h-2zM29 89h2v1h-2zM3 93h4v1h-4zM4 94h1v1h-1zM15 94h1v1h-1zM4 95h4v1h-4zM11 95h3v1h-3zM15 95h4v1h-4zM2 105h5v1h-5zM8 105h2v1h-2zM11 105h5v1h-5zM18 105h1v1h-1zM22 105h3v1h-3zM26 105h5v1h-5zM32 105h2v1h-2zM35 105h5v1h-5zM41 105h5v1h-5zM47 105h3v1h-3zM52 105h1v1h-1zM10 106h1v1h-1zM2 107h1v1h-1zM4 107h2v1h-2zM8 107h3v1h-3zM22 107h3v1h-3zM26 107h3v1h-3zM31 107h1v1h-1zM2 109h4v1h-4zM7 109h4v1h-4zM22 109h3v1h-3zM26 109h3v1h-3zM30 109h4v1h-4zM3 111h1v1h-1zM5 111h8v1h-8zM22 111h3v1h-3zM27 111h1v1h-1zM29 111h8v1h-8zM2 113h2v1h-2zM5 113h4v1h-4zM22 113h3v1h-3zM26 113h3v1h-3zM30 113h4v1h-4zM2 119h5v1h-5zM8 119h2v1h-2zM11 119h5v1h-5zM18 119h1v1h-1zM22 119h3v1h-3zM26 119h5v1h-5zM32 119h2v1h-2zM35 119h5v1h-5zM41 119h5v1h-5zM47 119h3v1h-3zM52 119h1v1h-1zM10 120h1v1h-1zM2 121h1v1h-1zM4 121h2v1h-2zM8 121h3v1h-3zM22 121h3v1h-3zM26 121h3v1h-3zM31 121h1v1h-1zM2 123h4v1h-4zM7 123h4v1h-4zM22 123h3v1h-3zM27 123h7v1h-7zM35 123h6v1h-6zM3 125h1v1h-1zM5 125h8v1h-8zM22 125h3v1h-3zM27 125h1v1h-1zM29 125h8v1h-8zM2 127h2v1h-2zM5 127h4v1h-4zM22 127h3v1h-3zM27 127h7v1h-7zM35 127h6v1h-6zM2 135h5v1h-5zM8 135h2v1h-2zM11 135h5v1h-5zM18 135h1v1h-1zM22 135h3v1h-3zM26 135h5v1h-5zM32 135h2v1h-2zM35 135h5v1h-5zM41 135h5v1h-5zM47 135h3v1h-3zM52 135h1v1h-1zM10 136h1v1h-1zM2 137h1v1h-1zM4 137h2v1h-2zM8 137h3v1h-3zM22 137h3v1h-3zM26 137h3v1h-3zM31 137h1v1h-1zM2 139h4v1h-4zM7 139h4v1h-4zM22 139h3v1h-3zM26 139h3v1h-3zM30 139h4v1h-4zM3 141h1v1h-1zM5 141h8v1h-8zM22 141h3v1h-3zM27 141h1v1h-1zM29 141h8v1h-8zM2 143h2v1h-2zM5 143h4v1h-4zM22 143h3v1h-3zM26 143h3v1h-3zM30 143h4v1h-4zM2 151h5v1h-5zM8 151h2v1h-2zM11 151h5v1h-5zM18 151h1v1h-1zM22 151h3v1h-3zM26 151h5v1h-5zM32 151h2v1h-2zM35 151h5v1h-5zM41 151h5v1h-5zM47 151h3v1h-3zM52 151h1v1h-1zM10 152h1v1h-1zM2 153h1v1h-1zM4 153h2v1h-2zM8 153h3v1h-3zM22 153h3v1h-3zM26 153h3v1h-3zM31 153h1v1h-1zM3 155h1v1h-1zM5 155h8v1h-8zM22 155h3v1h-3zM26 155h3v1h-3zM30 155h8v1h-8zM37 164h1v1h-1zM2 165h5v1h-5zM20 165h3v1h-3zM25 165h7v1h-7zM33 165h5v1h-5zM39 165h4v1h-4zM44 165h1v1h-1zM47 165h1v1h-1z"/><path fill="#9cdcfe" fill-opacity="0.6" d="M5 3h1v1h-1zM18 3h1v1h-1zM4 11h1v1h-1zM24 11h1v1h-1zM5 12h1v1h-1zM11 12h1v1h-1zM25 12h1v1h-1zM31 12h1v1h-1zM2 13h1v1h-1zM10 13h1v1h-1zM22 13h1v1h-1zM30 13h1v1h-1zM2 14h1v1h-1zM22 14h1v1h-1zM5 15h1v1h-1zM25 15h1v1h-1zM12 16h1v1h-1zM22 16h1v1h-1zM39 16h1v1h-1zM49 16h2v1h-2zM54 16h2v1h-2zM59 16h1v1h-1zM5 17h1v1h-1zM11 17h1v1h-1zM14 17h1v1h-1zM20 17h2v1h-2zM32 17h1v1h-1zM38 17h1v1h-1zM41 17h1v1h-1zM53 17h1v1h-1zM58 17h1v1h-1zM6 22h1v1h-1zM24 22h1v1h-1zM11 26h1v1h-1zM14 26h1v1h-1zM29 26h1v1h-1zM32 26h1v1h-1zM8 27h1v1h-1zM13 27h1v1h-1zM26 27h1v1h-1zM31 27h1v1h-1zM6 28h1v1h-1zM9 28h1v1h-1zM22 28h2v1h-2zM27 28h2v1h-2zM29 29h1v1h-1zM31 29h2v1h-2zM10 38h1v1h-1zM8 39h1v1h-1zM11 39h1v1h-1zM12 68h1v1h-1zM7 74h1v1h-1zM12 76h1v1h-1zM2 88h1v1h-1zM9 88h1v1h-1zM20 88h1v1h-1zM27 88h1v1h-1zM7 89h1v1h-1zM10 89h1v1h-1zM25 89h1v1h-1zM28 89h1v1h-1zM3 92h1v1h-1zM8 104h1v1h-1zM18 104h1v1h-1zM32 104h1v1h-1zM42 104h2v1h-2zM47 104h2v1h-2zM52 104h1v1h-1zM7 105h1v1h-1zM10 105h1v1h-1zM16 105h2v1h-2zM25 105h1v1h-1zM31 105h1v1h-1zM34 105h1v1h-1zM46 105h1v1h-1zM51 105h1v1h-1zM4 106h1v1h-1zM3 107h1v1h-1zM6 107h2v1h-2zM29 107h2v1h-2zM2 108h1v1h-1zM10 108h1v1h-1zM33 108h1v1h-1zM6 109h1v1h-1zM29 109h1v1h-1zM8 110h1v1h-1zM12 110h1v1h-1zM32 110h1v1h-1zM36 110h1v1h-1zM2 111h1v1h-1zM4 111h1v1h-1zM26 111h1v1h-1zM28 111h1v1h-1zM2 112h1v1h-1zM8 112h1v1h-1zM33 112h1v1h-1zM4 113h1v1h-1zM29 113h1v1h-1zM8 118h1v1h-1zM18 118h1v1h-1zM32 118h1v1h-1zM42 118h2v1h-2zM47 118h2v1h-2zM52 118h1v1h-1zM7 119h1v1h-1zM10 119h1v1h-1zM16 119h2v1h-2zM25 119h1v1h-1zM31 119h1v1h-1zM34 119h1v1h-1zM46 119h1v1h-1zM51 119h1v1h-1zM4 120h1v1h-1zM3 121h1v1h-1zM6 121h2v1h-2zM29 121h2v1h-2zM2 122h1v1h-1zM10 122h1v1h-1zM28 122h1v1h-1zM33 122h1v1h-1zM6 123h1v1h-1zM26 123h1v1h-1zM34 123h1v1h-1zM8 124h1v1h-1zM12 124h1v1h-1zM32 124h1v1h-1zM36 124h1v1h-1zM2 125h1v1h-1zM4 125h1v1h-1zM26 125h1v1h-1zM28 125h1v1h-1zM2 126h1v1h-1zM8 126h1v1h-1zM28 126h1v1h-1zM33 126h1v1h-1zM4 127h1v1h-1zM26 127h1v1h-1zM34 127h1v1h-1zM8 134h1v1h-1zM18 134h1v1h-1zM32 134h1v1h-1zM42 134h2v1h-2zM47 134h2v1h-2zM52 134h1v1h-1zM7 135h1v1h-1zM10 135h1v1h-1zM16 135h2v1h-2zM25 135h1v1h-1zM31 135h1v1h-1zM34 135h1v1h-1zM46 135h1v1h-1zM51 135h1v1h-1zM4 136h1v1h-1zM3 137h1v1h-1zM6 137h2v1h-2zM29 137h2v1h-2zM2 138h1v1h-1zM10 138h1v1h-1zM28 138h1v1h-1zM33 138h1v1h-1zM6 139h1v1h-1zM29 139h1v1h-1zM8 140h1v1h-1zM12 140h1v1h-1zM32 140h1v1h-1zM36 140h1v1h-1zM2 141h1v1h-1zM4 141h1v1h-1zM26 141h1v1h-1zM28 141h1v1h-1zM2 142h1v1h-1zM8 142h1v1h-1zM28 142h1v1h-1zM33 142h1v1h-1zM4 143h1v1h-1zM29 143h1v1h-1zM8 150h1v1h-1zM18 150h1v1h-1zM32 150h1v1h-1zM42 150h2v1h-2zM47 150h2v1h-2zM52 150h1v1h-1zM7 151h1v1h-1zM10 151h1v1h-1zM16 151h2v1h-2zM25 151h1v1h-1zM31 151h1v1h-1zM34 151h1v1h-1zM46 151h1v1h-1zM51 151h1v1h-1zM4 152h1v1h-1zM27 152h2v1h-2zM3 153h1v1h-1zM6 153h2v1h-2zM29 153h2v1h-2zM8 154h1v1h-1zM12 154h1v1h-1zM27 154h2v1h-2zM33 154h1v1h-1zM37 154h1v1h-1zM2 155h1v1h-1zM4 155h1v1h-1zM29 155h1v1h-1zM4 164h1v1h-1zM27 164h1v1h-1zM41 164h2v1h-2zM23 165h2v1h-2zM43 165h1v1h-1zM45 165h2v1h-2z"/><path fill="#d4d4d4" fill-opacity="0.4" d="M9 2h1v1h-1zM9 3h1v1h-1zM16 10h1v1h-1zM16 11h1v1h-1zM16 12h1v1h-1zM16 13h1v1h-1zM16 14h1v1h-1zM16 15h1v1h-1zM25 16h1v1h-1zM25 17h1v1h-1zM18 22h1v1h-1zM18 23h1v1h-1zM18 24h1v1h-1zM18 25h1v1h-1zM18 26h1v1h-1zM18 27h1v1h-1zM18 28h1v1h-1zM18 29h1v1h-1zM15 38h1v1h-1zM15 39h1v1h-1zM32 41h1v1h-1zM41 49h1v1h-1zM42 53h1v1h-1zM49 55h1v1h-1zM14 68h1v1h-1zM14 69h1v1h-1zM11 74h1v1h-1zM11 75h1v1h-1zM14 76h1v1h-1zM14 77h1v1h-1zM14 86h1v1h-1zM14 87h1v1h-1zM14 88h1v1h-1zM14 89h1v1h-1zM8 92h1v1h-1zM8 93h1v1h-1zM9 94h1v1h-1zM9 95h1v1h-1zM20 104h1v1h-1zM20 105h1v1h-1zM20 106h1v1h-1zM20 107h1v1h-1zM20 108h1v1h-1zM20 109h1v1h-1zM20 110h1v1h-1zM20 111h1v1h-1zM20 112h1v1h-1zM20 113h1v1h-1zM20 118h1v1h-1zM20 119h1v1h-1zM20 120h1v1h-1zM20 121h1v1h-1zM20 122h1v1h-1zM20 123h1v1h-1zM20 124h1v1h-1zM20 125h1v1h-1zM20 126h1v1h-1zM20 127h1v1h-1zM20 134h1v1h-1zM20 135h1v1h-1zM20 136h1v1h-1zM20 137h1v1h-1zM20 138h1v1h-1zM20 139h1v1h-1zM20 140h1v1h-1zM20 141h1v1h-1zM20 142h1v1h-1zM20 143h1v1h-1zM20 150h1v1h-1zM20 151h1v1h-1zM20 152h1v1h-1zM20 153h1v1h-1zM20 154h1v1h-1zM20 155h1v1h-1zM8 164h1v1h-1zM8 165h1v1h-1z"/><path fill="#d4d4d4" fill-opacity="0.6" d="M27 16h1v1h-1zM61 16h1v1h-1zM27 17h1v1h-1zM61 17h1v1h-1zM17 38h1v1h-1zM17 39h1v1h-1z"/><path fill="#ce9178" fill-opacity="0.6" d="M12 40h1v1h-1zM15 40h1v1h-1zM24 40h1v1h-1zM26 40h1v1h-1zM31 40h1v1h-1zM12 44h1v1h-1zM15 44h1v1h-1zM25 44h1v1h-1zM27 44h2v1h-2zM32 44h1v1h-1zM45 44h1v1h-1zM50 44h3v1h-3zM61 44h1v1h-1zM70 44h1v1h-1zM94 44h1v1h-1zM101 44h1v1h-1zM22 45h1v1h-1zM106 45h1v1h-1zM12 48h1v1h-1zM15 48h1v1h-1zM25 48h1v1h-1zM27 48h2v1h-2zM36 48h1v1h-1zM40 48h1v1h-1zM22 49h1v1h-1zM12 52h1v1h-1zM15 52h1v1h-1zM21 52h1v1h-1zM25 52h2v1h-2zM28 52h1v1h-1zM37 52h1v1h-1zM40 52h2v1h-2zM12 54h1v1h-1zM15 54h1v1h-1zM21 54h1v1h-1zM25 54h2v1h-2zM29 54h1v1h-1zM32 54h1v1h-1zM37 54h1v1h-1zM48 54h1v1h-1zM12 56h1v1h-1zM15 56h1v1h-1zM21 56h1v1h-1zM25 56h2v1h-2zM31 56h2v1h-2zM38 56h1v1h-1zM49 56h1v1h-1zM16 68h1v1h-1zM19 68h1v1h-1zM25 68h1v1h-1zM27 68h1v1h-1zM48 68h1v1h-1zM52 68h1v1h-1zM65 68h1v1h-1zM67 68h2v1h-2zM71 68h1v1h-1zM80 68h1v1h-1zM82 68h1v1h-1zM86 68h1v1h-1zM91 68h1v1h-1zM98 68h1v1h-1zM101 68h1v1h-1zM104 68h1v1h-1zM109 68h1v1h-1zM100 69h1v1h-1zM16 76h1v1h-1zM19 76h1v1h-1zM36 76h1v1h-1zM42 76h1v1h-1zM46 76h1v1h-1zM58 76h1v1h-1zM60 76h2v1h-2zM65 76h1v1h-1zM68 76h1v1h-1zM73 76h8v1h-8zM33 77h1v1h-1zM10 164h4v1h-4zM54 164h1v1h-1z"/><path fill="#ce9178" fill-opacity="0.4" d="M13 40h2v1h-2zM16 40h1v1h-1zM18 40h3v1h-3zM22 40h2v1h-2zM25 40h1v1h-1zM27 40h1v1h-1zM29 40h2v1h-2zM13 44h2v1h-2zM16 44h1v1h-1zM18 44h3v1h-3zM22 44h3v1h-3zM26 44h1v1h-1zM30 44h2v1h-2zM33 44h5v1h-5zM39 44h5v1h-5zM47 44h1v1h-1zM53 44h8v1h-8zM62 44h4v1h-4zM67 44h3v1h-3zM71 44h3v1h-3zM75 44h13v1h-13zM91 44h3v1h-3zM95 44h6v1h-6zM102 44h8v1h-8zM30 45h1v1h-1zM34 45h1v1h-1zM38 45h1v1h-1zM44 45h1v1h-1zM55 45h3v1h-3zM66 45h1v1h-1zM74 45h1v1h-1zM78 45h1v1h-1zM82 45h1v1h-1zM86 45h1v1h-1zM13 48h2v1h-2zM16 48h1v1h-1zM18 48h3v1h-3zM22 48h3v1h-3zM26 48h1v1h-1zM30 48h2v1h-2zM33 48h3v1h-3zM37 48h3v1h-3zM13 52h2v1h-2zM16 52h1v1h-1zM18 52h3v1h-3zM22 52h3v1h-3zM29 52h8v1h-8zM38 52h2v1h-2zM13 54h2v1h-2zM16 54h1v1h-1zM18 54h3v1h-3zM22 54h3v1h-3zM28 54h1v1h-1zM30 54h2v1h-2zM34 54h3v1h-3zM38 54h10v1h-10zM13 56h2v1h-2zM16 56h1v1h-1zM18 56h3v1h-3zM22 56h3v1h-3zM28 56h3v1h-3zM33 56h1v1h-1zM35 56h3v1h-3zM39 56h10v1h-10zM17 68h2v1h-2zM20 68h1v1h-1zM23 68h2v1h-2zM26 68h1v1h-1zM28 68h1v1h-1zM31 68h5v1h-5zM41 68h6v1h-6zM49 68h2v1h-2zM53 68h4v1h-4zM59 68h6v1h-6zM66 68h1v1h-1zM69 68h1v1h-1zM72 68h3v1h-3zM76 68h4v1h-4zM81 68h1v1h-1zM84 68h2v1h-2zM88 68h3v1h-3zM92 68h3v1h-3zM96 68h2v1h-2zM99 68h2v1h-2zM102 68h1v1h-1zM105 68h2v1h-2zM108 68h1v1h-1zM110 68h2v1h-2zM17 76h2v1h-2zM20 76h1v1h-1zM23 76h5v1h-5zM33 76h3v1h-3zM37 76h4v1h-4zM43 76h2v1h-2zM47 76h3v1h-3zM52 76h6v1h-6zM59 76h1v1h-1zM62 76h1v1h-1zM66 76h2v1h-2zM69 76h4v1h-4zM74 77h6v1h-6zM14 164h4v1h-4zM49 164h1v1h-1zM15 165h3v1h-3zM49 165h1v1h-1z"/><path fill="#ce9178" fill-opacity="0.8" d="M13 41h4v1h-4zM18 41h3v1h-3zM22 41h6v1h-6zM30 41h1v1h-1zM48 44h1v1h-1zM88 44h2v1h-2zM110 44h2v1h-2zM13 45h4v1h-4zM18 45h3v1h-3zM23 45h6v1h-6zM31 45h3v1h-3zM35 45h3v1h-3zM39 45h5v1h-5zM45 45h1v1h-1zM48 45h1v1h-1zM50 45h5v1h-5zM58 45h8v1h-8zM67 45h7v1h-7zM75 45h3v1h-3zM79 45h3v1h-3zM83 45h3v1h-3zM87 45h3v1h-3zM91 45h7v1h-7zM99 45h7v1h-7zM107 45h2v1h-2zM110 45h2v1h-2zM13 49h4v1h-4zM18 49h3v1h-3zM23 49h6v1h-6zM31 49h1v1h-1zM33 49h7v1h-7zM13 53h4v1h-4zM18 53h9v1h-9zM28 53h6v1h-6zM35 53h6v1h-6zM13 55h4v1h-4zM18 55h9v1h-9zM28 55h5v1h-5zM34 55h7v1h-7zM42 55h6v1h-6zM13 57h4v1h-4zM18 57h9v1h-9zM28 57h6v1h-6zM35 57h7v1h-7zM43 57h6v1h-6zM22 68h1v1h-1zM30 68h1v1h-1zM37 68h3v1h-3zM58 68h1v1h-1zM17 69h4v1h-4zM22 69h7v1h-7zM30 69h6v1h-6zM37 69h3v1h-3zM41 69h6v1h-6zM48 69h3v1h-3zM52 69h5v1h-5zM58 69h12v1h-12zM71 69h4v1h-4zM76 69h7v1h-7zM84 69h3v1h-3zM88 69h7v1h-7zM96 69h4v1h-4zM101 69h2v1h-2zM104 69h3v1h-3zM108 69h4v1h-4zM22 76h1v1h-1zM29 76h3v1h-3zM51 76h1v1h-1zM17 77h4v1h-4zM22 77h6v1h-6zM29 77h3v1h-3zM34 77h7v1h-7zM42 77h3v1h-3zM46 77h4v1h-4zM51 77h12v1h-12zM65 77h9v1h-9zM50 164h4v1h-4zM11 165h4v1h-4zM50 165h4v1h-4z"/><path fill="#c586c0" fill-opacity="0.6" d="M13 74h1v1h-1zM16 74h1v1h-1z"/><path fill="#c586c0" fill-opacity="0.8" d="M13 75h7v1h-7z"/><path fill="#c586c0" fill-opacity="0.4" d="M14 74h2v1h-2zM17 74h3v1h-3z"/></svg>
<div class="abs" style="left:1305px;top:0;width:1px;height:654px;background:#141414"></div>
<div class="abs" style="left:1306px;top:104px;width:12px;height:2px;background:#a8a8a8"></div>
<div class="abs" style="left:1310px;top:106px;width:5px;height:5px;background:#a8a8a8"></div>
<div class="abs" style="left:1310px;top:161px;width:5px;height:6px;background:#a8a8a8"></div>
<div class="abs" style="left:1305px;top:169px;width:13px;height:191px;background:#464646"></div>
</div>
<div id="status" class="abs">
<svg style="left:11px;top:3px" width="11" height="14" viewBox="0 0 11 14"><path d="M1 13 L5 9 L1 5 M10 1 L6 5 L10 9" stroke="#ccc" stroke-width="1.2" fill="none"/></svg>
<svg style="left:40px;top:2px" width="16" height="16" viewBox="0 0 16 16"><circle cx="8" cy="8" r="6.6" stroke="#ccc" stroke-width="1.2" fill="none"/><path d="M5.5 5.5 L10.5 10.5 M10.5 5.5 L5.5 10.5" stroke="#ccc" stroke-width="1.2"/></svg>
<div class="sb" style="left:59px">0</div>
<svg style="left:69px;top:2px" width="16" height="15" viewBox="0 0 16 15"><path d="M8 1 L15 14 H1Z" stroke="#ccc" stroke-width="1.2" fill="none" stroke-linejoin="round"/><path d="M8 5 V10 M8 11.5 V12.8" stroke="#ccc" stroke-width="1.4"/></svg>
<div class="sb" style="left:88px">0</div>
<div class="sb" style="left:842px">Ln 20, Col 19</div>
<div class="sb" style="left:926px;letter-spacing:-0.5px">Spaces: 2</div>
<div class="sb" style="left:991px">UTF-8</div>
<div class="sb" style="left:1038px;letter-spacing:-1.2px">CRLF</div>
<div class="sb" style="left:1082px">{</div><div class="sb" style="left:1091px">}</div>
<div class="sb" style="left:1102px">Terraform</div>
<div class="abs" style="left:1162px;top:0;width:99px;height:21px;background:#3a3d41"></div>
<svg style="left:1168px;top:2px" width="19" height="18" viewBox="0 0 19 18"><circle cx="6.4" cy="5.1" r="2.7" stroke="#d0d0d0" stroke-width="1.4" fill="none"/><circle cx="12.6" cy="5.1" r="2.7" stroke="#d0d0d0" stroke-width="1.4" fill="none"/><path d="M3.6 7.8 Q1.6 8.6 1.6 11.5 Q1.6 14.6 4.5 15.6 Q9.5 17 14.5 15.6 Q17.4 14.6 17.4 11.5 Q17.4 8.6 15.4 7.8" stroke="#d0d0d0" stroke-width="1.4" fill="none"/><path d="M5.2 9.9 H13.8 V13.6 Q9.5 15 5.2 13.6Z" stroke="#d0d0d0" stroke-width="1" fill="#1d1d1d"/><path d="M8 11 V13.2 M11 11 V13.2" stroke="#d0d0d0" stroke-width="1.2"/></svg>
<div class="sb" style="left:1189px">Finish Setup</div>
<svg style="left:1269px;top:3px" width="15" height="15" viewBox="0 0 15 15"><circle cx="7.5" cy="7.5" r="6.3" stroke="#ccc" stroke-width="1.2" fill="none"/><path d="M3 12 L12 3" stroke="#ccc" stroke-width="1.2"/></svg>
<div class="sb" style="left:1288px">Prettier</div>
<svg style="left:1343px;top:3px" width="15" height="16" viewBox="0 0 15 16"><path d="M2 12 H13 L11.5 10 V6.5 Q11.5 2.5 7.5 2.5 Q3.5 2.5 3.5 6.5 V10Z M6 13.5 Q7.5 15 9 13.5 M7.5 1 V2.5" stroke="#ccc" stroke-width="1.2" fill="none" stroke-linejoin="round"/></svg>
</div>
</body></html>
